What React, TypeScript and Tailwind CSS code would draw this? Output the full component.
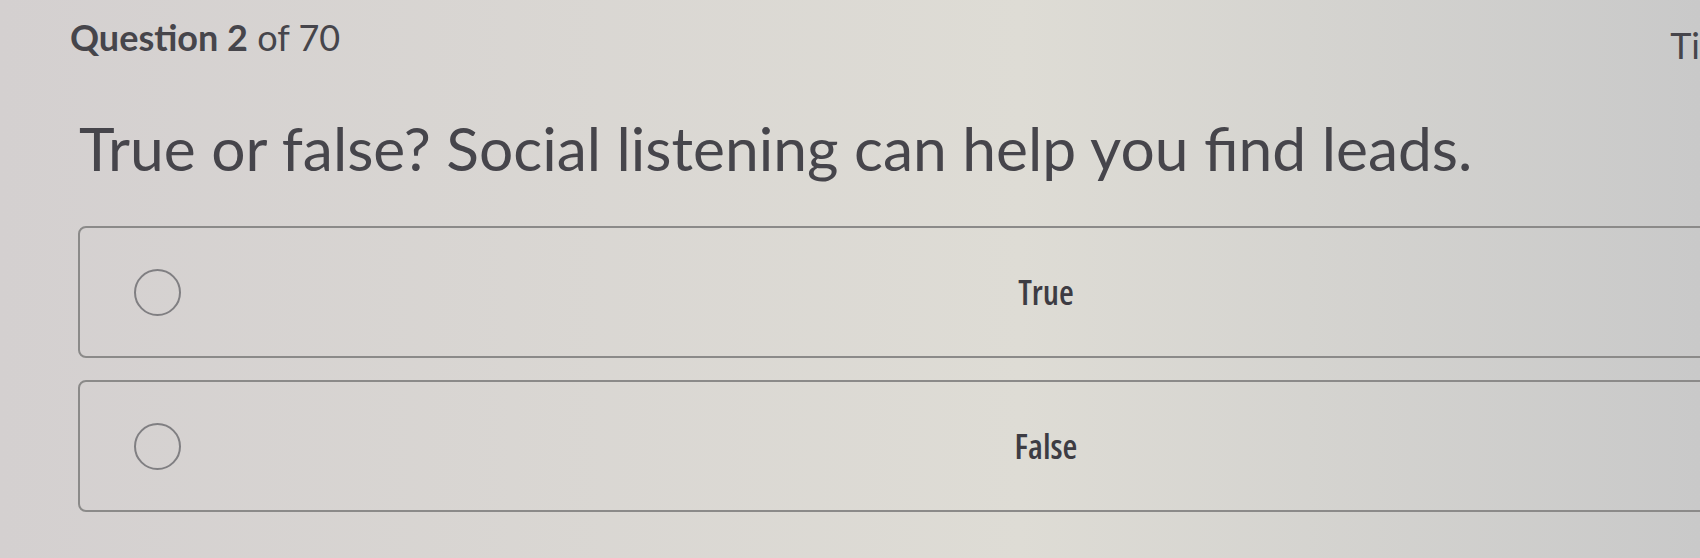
import { useState } from 'react';

const options = ['True', 'False'];

function Radio({ checked }: { checked: boolean }) {
  return (
    <span className="flex h-[47px] w-[47px] shrink-0 items-center justify-center rounded-full border-2 border-[#807f82]">
      {checked && <span className="h-[25px] w-[25px] rounded-full bg-[#4a4a52]" />}
    </span>
  );
}

export default function App() {
  const [picked, setPicked] = useState<string | null>(null);

  return (
    <div
      className="h-[558px] w-[1700px] overflow-hidden bg-gradient-to-r from-[#d4d0d0] via-[#dedcd5] via-60% to-[#c9c9c9] text-[#46454b]"
      style={{ fontFamily: 'Lato, "Open Sans", sans-serif' }}
    >
      <header className="flex h-[57px] items-start pl-[70px] pt-[17px]">
        <p className="whitespace-nowrap text-[36px] leading-[40px]">
          <span className="font-bold">Question 2</span> of 70
        </p>
        <p className="ml-auto whitespace-nowrap pt-[8px] text-[36px] leading-[40px]">Ti</p>
      </header>

      <h1 className="mt-[56px] whitespace-nowrap pl-[79px] text-[60.5px] leading-[70px]">
        True or false? Social listening can help you find leads.
      </h1>

      <div className="mt-[43px] flex w-[2014px] flex-col gap-[22px] pl-[78px]">
        {options.map((opt) => (
          <button
            key={opt}
            onClick={() => setPicked(opt)}
            className="relative flex h-[132px] w-full items-center rounded-[8px] border-2 border-[#8b8a89] pl-[54px] text-left"
          >
            <Radio checked={picked === opt} />
            <span
              className="absolute left-1/2 -translate-x-1/2 text-[34px] font-semibold text-[#3d3c43] [font-stretch:75%]"
              style={{ fontFamily: '"Open Sans", sans-serif' }}
            >
              {opt}
            </span>
          </button>
        ))}
      </div>
    </div>
  );
}
